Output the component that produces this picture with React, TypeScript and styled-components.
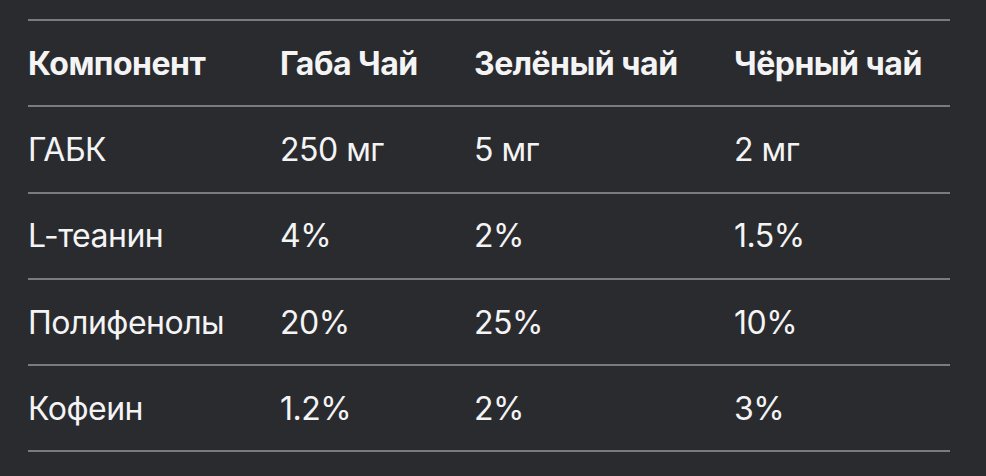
import React from "react";
import styled, { createGlobalStyle } from "styled-components";

const Global = createGlobalStyle`
  html, body { margin: 0; padding: 0; background: #2a2b2f; }
  body { font-family: Inter, "Noto Sans", sans-serif; color: #f4f4f5; }
`;

const Page = styled.div`
  width: 986px;
  height: 476px;
  box-sizing: border-box;
  padding: 19px 36px 0 28px;
  background: #2a2b2f;
`;

const Table = styled.div`
  display: grid;
  grid-template-columns: 252px 194px 260px 216px;
  border-top: 2px solid #7b7b7c;
`;

const Cell = styled.div<{ $head?: boolean }>`
  height: 84.3px;
  display: flex;
  align-items: center;
  border-bottom: 2px solid #7b7b7c;
  font-size: 32px;
  font-weight: ${(p) => (p.$head ? 700 : 400)};
  letter-spacing: -0.5px;
  white-space: nowrap;
  color: #f4f4f5;
`;

const head = ["Компонент", "Габа Чай", "Зелёный чай", "Чёрный чай"];
const rows = [
  ["ГАБК", "250 мг", "5 мг", "2 мг"],
  ["L-теанин", "4%", "2%", "1.5%"],
  ["Полифенолы", "20%", "25%", "10%"],
  ["Кофеин", "1.2%", "2%", "3%"],
];

export default function App() {
  return (
    <>
      <Global />
      <Page>
        <Table>
          {head.map((h) => (
            <Cell $head key={h}>{h}</Cell>
          ))}
          {rows.map((r, i) =>
            r.map((c, j) => <Cell key={`${i}-${j}`}>{c}</Cell>)
          )}
        </Table>
      </Page>
    </>
  );
}
